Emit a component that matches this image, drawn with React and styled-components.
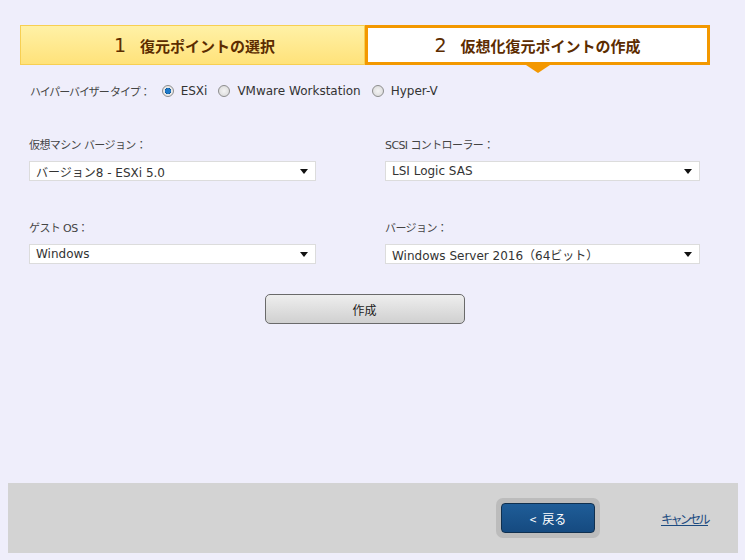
import React from 'react'
import styled, { createGlobalStyle } from 'styled-components'

const GlobalStyle = createGlobalStyle`
  html, body { margin: 0; padding: 0; background: #efeefb; }
  body { font-family: "DejaVu Sans", "Noto Sans CJK JP", sans-serif; }
`

const Page = styled.div`
  width: 745px;
  height: 560px;
  box-sizing: border-box;
  padding-top: 25px;
  display: flex;
  flex-direction: column;
`

const Steps = styled.div`
  display: flex;
  margin: 0 35px 0 20px;
  height: 40px;
`

const Step = styled.div`
  flex: 0 0 345px;
  box-sizing: border-box;
  position: relative;
  display: flex;
  align-items: center;
  justify-content: center;
  gap: 14px;
  color: #5c2c00;
  font-family: "Noto Sans CJK JP", sans-serif;
  font-weight: 700;
  font-size: 15px;
  padding-left: ${p => p.active ? '0' : '4px'};
  background: ${p => p.active ? '#ffffff' : 'linear-gradient(#fff1a6, #ffe27a)'};
  border: ${p => p.active ? '3px solid #f39800' : '1px solid #f7cf52'};

  ${p => p.active && `
    &::after {
      content: '';
      position: absolute;
      left: 50%;
      bottom: -11px;
      margin-left: -12px;
      border-left: 12px solid transparent;
      border-right: 12px solid transparent;
      border-top: 8px solid #f39800;
    }
  `}
`

const StepNum = styled.span`
  font-family: "DejaVu Sans", sans-serif;
  font-weight: 400;
  font-size: 19px;
`

const TypeRow = styled.div`
  display: flex;
  align-items: center;
  margin: 17px 0 0 30px;
  height: 18px;
  font-size: 12px;
  color: #333;
`

const TypeLabel = styled.span`
  font-family: "Noto Sans CJK JP", sans-serif;
  font-size: 11px;
  letter-spacing: -1.1px;
  color: #444;
  margin-right: 12px;
`

const RadioItem = styled.label`
  display: flex;
  align-items: center;
  margin-right: 11px;
  color: #333;
`

const RadioDot = styled.span`
  width: 12px;
  height: 12px;
  border-radius: 50%;
  box-sizing: border-box;
  border: 1px solid #8d8d8d;
  background: ${p => p.checked
    ? 'radial-gradient(circle, #1d79c9 0 2.5px, #0c4c86 3px, #e8e8e8 3.5px)'
    : 'radial-gradient(circle, #f4f4f4, #d6d6d6)'};
  margin-right: 7px;
`

const Form = styled.div`
  display: grid;
  grid-template-columns: 287px 315px;
  column-gap: 69px;
  row-gap: 38px;
  margin: 36px 0 0 29px;
`

const Field = styled.div`
  display: flex;
  flex-direction: column;
`

const FieldLabel = styled.div`
  font-family: "DejaVu Sans", "Noto Sans CJK JP", sans-serif;
  font-size: 11px;
  letter-spacing: -0.6px;
  color: #444;
  height: 16px;
  margin-bottom: 9px;
`

const Select = styled.div`
  height: 20px;
  box-sizing: border-box;
  background: #fff;
  border: 1px solid #dcdcdc;
  display: flex;
  align-items: center;
  justify-content: space-between;
  padding: 0 7px 0 6px;
  font-size: 12px;
  color: #333;
`

const Arrow = styled.span`
  width: 0;
  height: 0;
  border-left: 4px solid transparent;
  border-right: 4px solid transparent;
  border-top: 5px solid #111;
`

const CreateRow = styled.div`
  display: flex;
  justify-content: center;
  margin-top: 30px;
  padding-right: 16px;
`

const CreateButton = styled.button`
  width: 200px;
  height: 30px;
  border: 1px solid #6a6a6a;
  border-radius: 5px;
  background: linear-gradient(#eeeeee, #d0d0d0);
  font-family: "Noto Sans CJK JP", sans-serif;
  font-size: 12px;
  color: #222;
`

const Footer = styled.div`
  margin: auto 7px 7px 8px;
  height: 70px;
  background: #d3d3d3;
  display: flex;
  align-items: center;
  justify-content: flex-end;
  padding-right: 30px;
`

const BackRing = styled.div`
  padding: 5px;
  border-radius: 7px;
  background: #bcbcbc;
  margin-right: 61px;
`

const BackButton = styled.button`
  width: 94px;
  height: 30px;
  border: 1px solid #10304f;
  border-radius: 4px;
  background: linear-gradient(#1f5d98, #154a80);
  color: #fff;
  font-family: "Noto Sans CJK JP", sans-serif;
  font-size: 12px;
  display: flex;
  align-items: center;
  justify-content: center;
  gap: 6px;
`

const CancelLink = styled.a`
  font-family: "Noto Sans CJK JP", sans-serif;
  font-size: 12px;
  letter-spacing: -2.6px;
  color: #1b4a80;
  text-decoration: underline;
`

export default function App() {
  return (
    <Page>
      <GlobalStyle />
      <Steps>
        <Step><StepNum>1</StepNum>復元ポイントの選択</Step>
        <Step active><StepNum>2</StepNum>仮想化復元ポイントの作成</Step>
      </Steps>

      <TypeRow>
        <TypeLabel>ハイパーバイザー タイプ：</TypeLabel>
        <RadioItem><RadioDot checked />ESXi</RadioItem>
        <RadioItem><RadioDot />VMware Workstation</RadioItem>
        <RadioItem><RadioDot />Hyper-V</RadioItem>
      </TypeRow>

      <Form>
        <Field>
          <FieldLabel>仮想マシン バージョン：</FieldLabel>
          <Select>バージョン8 - ESXi 5.0<Arrow /></Select>
        </Field>
        <Field>
          <FieldLabel>SCSI コントローラー：</FieldLabel>
          <Select>LSI Logic SAS<Arrow /></Select>
        </Field>
        <Field>
          <FieldLabel>ゲスト OS：</FieldLabel>
          <Select>Windows<Arrow /></Select>
        </Field>
        <Field>
          <FieldLabel>バージョン：</FieldLabel>
          <Select>Windows Server 2016（64ビット）<Arrow /></Select>
        </Field>
      </Form>

      <CreateRow>
        <CreateButton>作成</CreateButton>
      </CreateRow>

      <Footer>
        <BackRing>
          <BackButton><span>&lt;</span>戻る</BackButton>
        </BackRing>
        <CancelLink href="#">キャンセル</CancelLink>
      </Footer>
    </Page>
  )
}
